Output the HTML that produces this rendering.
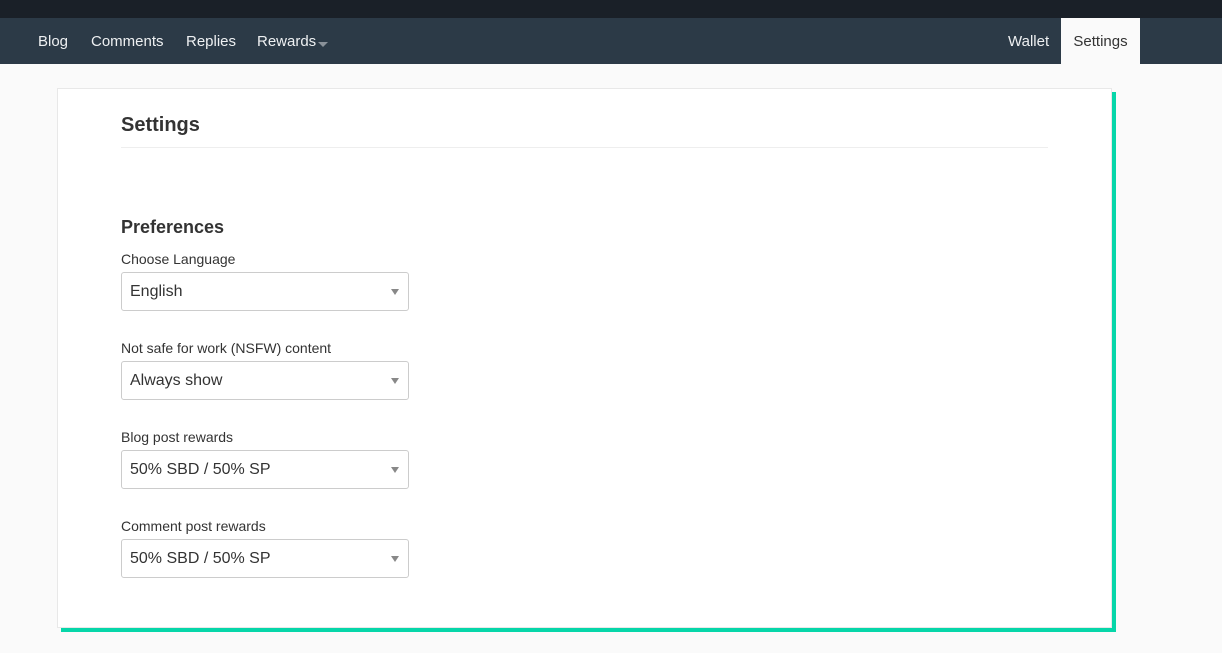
<!DOCTYPE html>
<html><head><meta charset="utf-8"><style>
*{box-sizing:border-box;margin:0;padding:0}
body{width:1222px;height:653px;background:#fafafa;font-family:"Liberation Sans",sans-serif;position:relative;overflow:hidden;color:#333}
.top{position:absolute;left:0;top:0;width:1222px;height:18px;background:#1a2028}
.nav{position:absolute;left:0;top:18px;width:1222px;height:46px;background:#2c3a47}
.nav span{position:absolute;top:0;line-height:48px;color:#eef0f2;font-size:15px}
.tab{position:absolute;left:1061px;top:18px;width:79px;height:46px;background:#fafafa;color:#333;font-size:15px;line-height:48px;text-align:center}
.card{position:absolute;left:57px;top:88px;width:1055px;height:540px;background:#fff;border:1px solid #e8e8e8;box-shadow:4px 4px 0 #06d6a9}
h1{position:absolute;left:121px;top:114px;font-size:20px;font-weight:bold;color:#333}
.hr{position:absolute;left:121px;top:147px;width:927px;height:1px;background:#eee}
h2{position:absolute;left:121px;top:217px;font-size:18px;font-weight:bold;color:#333}
.lbl{position:absolute;left:121px;font-size:14px;color:#333}
.sel{position:absolute;left:121px;width:288px;height:39px;border:1px solid #ccc;border-radius:3px;font-size:16px;line-height:37px;padding-left:8px;color:#333}
.sel:after{content:"";position:absolute;right:9px;top:16px;border-left:4px solid transparent;border-right:4px solid transparent;border-top:6px solid #888}
.arr{position:absolute;left:318px;top:24px;border-left:5px solid transparent;border-right:5px solid transparent;border-top:5px solid #8a9199}
</style></head><body>
<div class="top"></div>
<div class="nav">
<span style="left:38px">Blog</span><span style="left:91px">Comments</span><span style="left:186px">Replies</span><span style="left:257px">Rewards</span><div class="arr"></div>
<span style="left:1008px">Wallet</span>
</div>
<div class="tab">Settings</div>
<div class="card"></div>
<h1>Settings</h1>
<div class="hr"></div>
<h2>Preferences</h2>
<div class="lbl" style="top:251px">Choose Language</div>
<div class="sel" style="top:272px">English</div>
<div class="lbl" style="top:340px">Not safe for work (NSFW) content</div>
<div class="sel" style="top:361px">Always show</div>
<div class="lbl" style="top:429px">Blog post rewards</div>
<div class="sel" style="top:450px">50% SBD / 50% SP</div>
<div class="lbl" style="top:518px">Comment post rewards</div>
<div class="sel" style="top:539px">50% SBD / 50% SP</div>
</body></html>
